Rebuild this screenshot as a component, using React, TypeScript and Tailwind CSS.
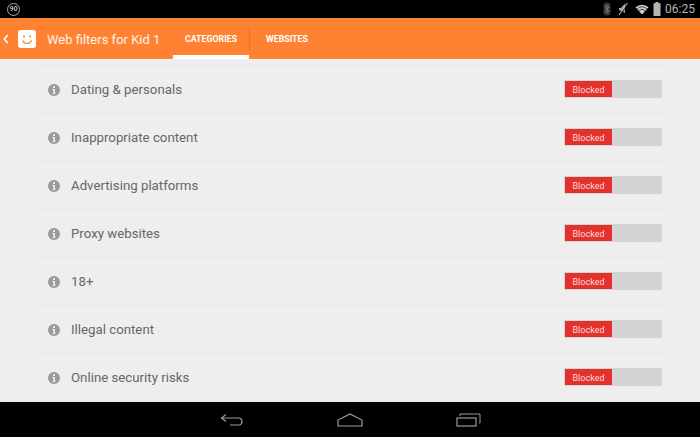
const rows = [
  "Dating & personals",
  "Inappropriate content",
  "Advertising platforms",
  "Proxy websites",
  "18+",
  "Illegal content",
  "Online security risks",
];

function InfoIcon() {
  return (
    <svg width="12" height="12" viewBox="0 0 12 12" className="shrink-0">
      <circle cx="6" cy="6" r="6" fill="#9a9a9a" />
      <rect x="5" y="2.2" width="2" height="1.8" fill="#eeeeee" />
      <path d="M4.4 5h2.6v3.9h.8v.9H4.4v-.9h.8V5.9h-.8z" fill="#eeeeee" />
    </svg>
  );
}

function StatusIcons() {
  return (
    <div className="flex items-center">
      <svg width="8" height="14" viewBox="0 0 8 14" className="mr-[6px]">
        <rect x="0.5" y="0.5" width="7" height="13" rx="3.2" fill="#3a3a3a" />
        <path d="M2 4.500 5.800 9 4 11V3l1.800 2L2 9.500" fill="none" stroke="#808080" strokeWidth="0.8" />
      </svg>
      <svg width="12" height="14" viewBox="0 0 12 14" className="mr-[6px]">
        <path d="M2 6h2l4-4.500V11L4 8.500H2z" fill="#aaa" />
        <path d="M2 13 10.500 1" stroke="#aaa" strokeWidth="1.200" />
        <path d="M3 13.500 11.500 1.500" stroke="#000" strokeWidth="0.800" />
      </svg>
      <svg width="14" height="11" viewBox="0 0 14 11" className="mr-[4px]">
        <path d="M0.500 3.200a9.500 9.500 0 0 1 13 0L7 10.500z" fill="#d0d0d0" />
        <path d="M2.200 4.700a7 7 0 0 1 9.600 0" stroke="#000" strokeWidth="0.700" fill="none" />
        <path d="M4 6.600a4.400 4.400 0 0 1 6 0" stroke="#000" strokeWidth="0.700" fill="none" />
      </svg>
      <svg width="8" height="14" viewBox="0 0 8 14" className="mr-[4px]">
        <rect x="2.500" y="0" width="3" height="2" fill="#b5b5b5" />
        <rect x="0.500" y="1.200" width="7" height="12.800" fill="#b5b5b5" />
      </svg>
    </div>
  );
}

export default function App() {
  return (
    <div className="w-[700px] h-[437px] flex flex-col overflow-hidden bg-[#eeeeee] font-['Roboto',sans-serif]">
      <div className="h-[18px] bg-black flex items-center justify-between pl-[7px] pr-[5px] shrink-0">
        <div className="w-[13px] h-[13px] rounded-full border border-[#aaaaaa] flex items-center justify-center text-[7px] font-bold leading-none text-[#bbbbbb]">
          90
        </div>
        <div className="flex items-center">
          <StatusIcons />
          <span className="text-[12px] leading-none text-[#b5b5b5]">06:25</span>
        </div>
      </div>

      <div className="h-[41px] bg-[#ff8232] flex items-stretch shrink-0">
        <div className="flex items-center w-[173px] shrink-0 pl-[3px]">
          <svg width="6" height="10" viewBox="0 0 6 10" className="mr-[9px]">
            <path d="M4.800 1 1.300 5l3.500 4" fill="none" stroke="#fff" strokeWidth="1.600" />
          </svg>
          <svg width="18" height="18" viewBox="0 0 18 18" className="mr-[11px] shrink-0">
            <rect width="18" height="18" rx="3" fill="#fff" />
            <circle cx="6" cy="6.500" r="1.100" fill="#ff8232" />
            <circle cx="12" cy="6.500" r="1.100" fill="#ff8232" />
            <path d="M4.500 10.500c1 2.300 2.700 3 4.500 3s3.500-.7 4.500-3" fill="none" stroke="#ff8232" strokeWidth="1.200" />
          </svg>
          <span className="text-[13px] pt-px leading-none text-white/90 whitespace-nowrap">Web filters for Kid 1</span>
        </div>
        <div className="w-[76px] flex items-center justify-center border-b-[4px] border-white pt-[6px] text-[8.800px] font-bold text-white">
          CATEGORIES
        </div>
        <div className="w-px h-[23px] bg-[#e8742a] mt-[9px]" />
        <div className="pl-[16px] flex items-center pt-[3px] text-[8.800px] font-bold text-white">WEBSITES</div>
      </div>

      <div className="flex-1 min-h-0 overflow-hidden mx-[37px] pt-[6px]">
        {rows.map((r) => (
          <div
            key={r}
            className="h-[48px] border-t border-[#e6e6e6] flex items-center justify-between pl-[11px] pr-px"
          >
            <div className="flex items-center gap-[11px]">
              <InfoIcon />
              <span className="text-[13.250px] leading-[20px] pt-px text-[#666666]">{r}</span>
            </div>
            <div className="w-[98px] h-[18px] -mt-[1px] bg-[#d4d4d4] flex items-center pl-px">
              <div className="w-[47px] h-[16px] bg-[#e3312b] flex items-center justify-center pt-[2px] text-[9px] leading-none text-[#f7dcdc]">
                Blocked
              </div>
            </div>
          </div>
        ))}
      </div>

      <div className="h-[35px] bg-black flex items-center justify-center shrink-0 gap-[93px] pl-[1px]">
        <svg width="24" height="14" viewBox="0 0 24 14">
          <path d="M6 1.500 1.500 5 6 8.500M1.500 5H19a3.500 3.500 0 0 1 3 3.500 3.500 3.500 0 0 1-3 3.500h-9" fill="none" stroke="#9a9a9a" strokeWidth="1.200" />
        </svg>
        <svg width="26" height="14" viewBox="0 0 26 14">
          <path d="M1 13V7L13 1l12 6v6z" fill="none" stroke="#9a9a9a" strokeWidth="1.200" />
        </svg>
        <svg width="25" height="14" viewBox="0 0 25 14">
          <path d="M4 3V1h20v9h-1" fill="none" stroke="#9a9a9a" strokeWidth="1" />
          <rect x="1" y="5" width="19" height="8" fill="none" stroke="#9a9a9a" strokeWidth="1.200" />
        </svg>
      </div>
    </div>
  );
}
